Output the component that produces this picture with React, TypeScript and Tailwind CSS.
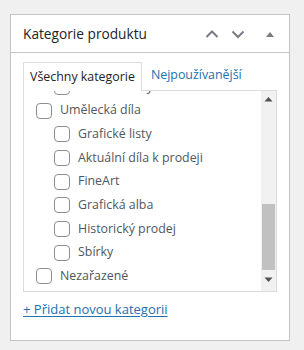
import React from "react";

const items: { label: string; depth: number }[] = [
  { label: "Vzácné knihy", depth: 1 },
  { label: "Umělecká díla", depth: 0 },
  { label: "Grafické listy", depth: 1 },
  { label: "Aktuální díla k prodeji", depth: 1 },
  { label: "FineArt", depth: 1 },
  { label: "Grafická alba", depth: 1 },
  { label: "Historický prodej", depth: 1 },
  { label: "Sbírky", depth: 1 },
  { label: "Nezařazené", depth: 0 },
];

export default function App() {
  return (
    <div
      className="w-[304px] h-[350px] bg-[#f0f0f1] pt-[14px] pl-[10px]"
      style={{ fontFamily: '"Open Sans", "Noto Sans", sans-serif' }}
    >
      <div className="w-[280px] h-[327px] bg-white border border-[#c3c4c7]">
        <div className="h-[38px] border-b border-[#c3c4c7] flex items-center pl-[12px] pr-[12px]">
          <h2 className="text-[13.7px] text-[#1d2327] flex-1 leading-none">Kategorie produktu</h2>
          <svg width="14" height="14" viewBox="0 0 14 14" className="mr-[12px]">
            <path d="M1.5 10 L7 4.5 L12.5 10" fill="none" stroke="#787c82" strokeWidth="2" />
          </svg>
          <svg width="14" height="14" viewBox="0 0 14 14" className="mr-[20px]">
            <path d="M1.5 4.5 L7 10 L12.5 4.5" fill="none" stroke="#787c82" strokeWidth="2" />
          </svg>
          <svg width="10" height="8" viewBox="0 0 10 8" className="mr-[2px]">
            <path d="M1 7 L5 2 L9 7 Z" fill="#787c82" />
          </svg>
        </div>
        <div className="px-[12px] pt-[8px]">
          <div className="flex items-end h-[29px]">
            <div className="h-[29px] px-[6px] border border-b-0 border-[#dcdcde] bg-white text-[12.4px] text-[#1d2327] flex items-center relative z-10 mb-[-1px]">
              Všechny kategorie
            </div>
            <div className="h-[29px] px-[9px] text-[12.4px] text-[#2271b1] flex items-center">
              Nejpoužívanější
            </div>
          </div>
          <div className="w-[254px] h-[202px] border border-[#dcdcde] flex overflow-hidden">
            <div className="flex-1 overflow-hidden">
              <ul className="mt-[-16px] pl-[12px]">
                {items.map((it) => (
                  <li
                    key={it.label}
                    className="h-[23.7px] flex items-center text-[12.4px] text-[#50575e]"
                    style={{ paddingLeft: it.depth * 18 }}
                  >
                    <span className="w-[16px] h-[16px] border border-[#8c8f94] rounded-[4px] bg-white mr-[8px] shrink-0" />
                    {it.label}
                  </li>
                ))}
              </ul>
            </div>
            <div className="w-[15px] bg-[#f1f1f1] flex flex-col items-center">
              <svg width="9" height="6" viewBox="0 0 9 6" className="mt-[5px]">
                <path d="M0.5 5.5 L4.5 1 L8.5 5.5 Z" fill="#505050" />
              </svg>
              <div className="w-[13px] h-[66px] bg-[#c1c1c1] mt-[102px]" />
              <svg width="9" height="6" viewBox="0 0 9 6" className="mt-[7px]">
                <path d="M0.5 0.5 L4.5 5 L8.5 0.5 Z" fill="#505050" />
              </svg>
            </div>
          </div>
          <div className="mt-[8px] text-[13px] text-[#2271b1] underline underline-offset-2">
            + Přidat novou kategorii
          </div>
        </div>
      </div>
    </div>
  );
}
